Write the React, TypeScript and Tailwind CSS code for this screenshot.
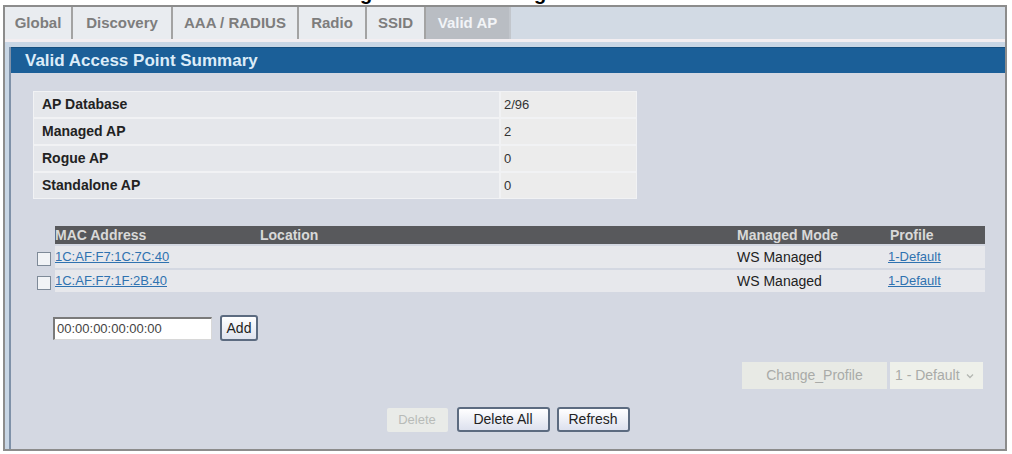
import React from "react";

const tabs = [
  { label: "Global", w: "w-[68px]" },
  { label: "Discovery", w: "w-[100px]" },
  { label: "AAA / RADIUS", w: "w-[126px]" },
  { label: "Radio", w: "w-[68px]" },
  { label: "SSID", w: "w-[59px]" },
];

const summary = [
  ["AP Database", "2/96"],
  ["Managed AP", "2"],
  ["Rogue AP", "0"],
  ["Standalone AP", "0"],
];

const macs = ["1C:AF:F7:1C:7C:40", "1C:AF:F7:1F:2B:40"];

export default function App() {
  return (
    <div
      className="w-[1012px] h-[454px] bg-white overflow-hidden"
      style={{ fontFamily: '"Liberation Sans", Arial, sans-serif' }}
    >
      {/* caption descenders */}
      <div className="relative h-[5px] overflow-hidden">
        <span className="absolute left-[360px] top-[-17px] text-[20px] font-bold text-black leading-none">g</span>
        <span className="absolute left-[534px] top-[-17px] text-[20px] font-bold text-black leading-none">g</span>
      </div>
      <div className="ml-[3px] w-[1004px] h-[446px] border-2 border-[#8c8c8c] flex flex-col bg-[#c8d6e5]">
        {/* tabs */}
        <div className="h-[32px] flex bg-[#d2dae4] shrink-0">
          {tabs.map((t) => (
            <div
              key={t.label}
              className={`${t.w} h-full bg-[#e9ecf0] border-r-2 border-[#a3a3a3] flex items-center justify-center text-[15px] font-bold text-[#7d7d7d]`}
            >
              {t.label}
            </div>
          ))}
          <div className="w-[85px] h-full bg-[#b9bdc3] border-r-2 border-[#c2c6cc] flex items-center justify-center text-[15px] font-bold text-[#f2f4f7]">
            Valid AP
          </div>
        </div>
        <div className="h-[3px] bg-[#f3eef1] shrink-0" />
        <div className="flex-1 pt-[5px] pl-[4px] flex">
          <div className="flex-1 border-l-2 border-[#7f91a8] bg-[#d4d8e2] flex flex-col">
            <div className="h-[26px] bg-[#1b5f98] border-t border-[#164f80] flex items-center pl-[14px] text-[17px] font-bold text-[#dcecf8]">
              Valid Access Point Summary
            </div>

            {/* summary table */}
            <div className="mt-[18px] ml-[22px] w-[604px] bg-[#f1f2f4] p-[1px] flex flex-col gap-[2px]">
              {summary.map(([k, v]) => (
                <div key={k} className="h-[25px] flex gap-[2px]">
                  <div className="w-[465px] bg-[#e5e7eb] flex items-center pl-[8px] text-[14px] font-bold text-[#222]">
                    {k}
                  </div>
                  <div className="flex-1 bg-[#ececec] flex items-center pl-[3px] text-[13px] text-[#333]">
                    {v}
                  </div>
                </div>
              ))}
            </div>

            {/* MAC table */}
            <div className="mt-[27px] ml-[24px] flex flex-col">
              <div className="flex">
                <div className="w-[20px]" />
                <div className="w-[930px] h-[18px] bg-[#58595c] grid grid-cols-[205px_477px_151px_1fr] items-center text-[14px] font-bold text-[#d9d9d9] leading-none">
                  <span>MAC Address</span>
                  <span>Location</span>
                  <span>Managed Mode</span>
                  <span className="pl-[2px]">Profile</span>
                </div>
              </div>
              {macs.map((m) => (
                <div key={m} className="flex mt-[2px]">
                  <div className="w-[20px] flex items-center">
                    <div className="w-[14px] h-[14px] mt-[4px] ml-[2px] border border-[#7e8a98] bg-[#f1f3f6]" />
                  </div>
                  <div className="w-[930px] h-[22px] bg-[#e7e8ec] grid grid-cols-[205px_477px_151px_1fr] items-center text-[14px] text-[#222]">
                    <span className="text-[13px] text-[#2f72b0] underline">{m}</span>
                    <span />
                    <span>WS Managed</span>
                    <span className="text-[13px] text-[#2f72b0] underline">1-Default</span>
                  </div>
                </div>
              ))}
            </div>

            {/* add row */}
            <div className="mt-[23px] ml-[42px] flex items-center gap-[8px]">
              <div className="w-[159px] h-[23px] bg-white border-t-2 border-l-2 border-[#7a7a7a] border-r border-b border-r-[#d8d8d8] border-b-[#d8d8d8] flex items-center pl-[2px] text-[13px] text-[#444]">
                00:00:00:00:00:00
              </div>
              <div className="w-[38px] h-[26px] rounded-[3px] border-2 border-[#5c6b80] bg-gradient-to-b from-[#ffffff] to-[#dfe3ee] flex items-center justify-center text-[14px] text-[#222]">
                Add
              </div>
            </div>

            {/* change profile row */}
            <div className="mt-[21px] mr-[22px] flex justify-end gap-[3px]">
              <div className="w-[145px] h-[27px] bg-[#e8eae5] flex items-center justify-center text-[14px] text-[#a9aba8]">
                Change_Profile
              </div>
              <div className="w-[93px] h-[27px] bg-[#eef0ea] flex items-center pl-[5px] text-[14px] text-[#a9aba8]">
                <span>1 - Default</span>
                <svg className="ml-[6px]" width="8" height="6" viewBox="0 0 8 6">
                  <path d="M1 1.5 L4 4.5 L7 1.5" stroke="#b4b7b2" strokeWidth="1.3" fill="none" />
                </svg>
              </div>
            </div>

            {/* bottom buttons */}
            <div className="mt-[18px] flex justify-center items-center">
              <div className="w-[61px] h-[24px] bg-[#e9ebe8] rounded-[2px] flex items-center justify-center text-[13px] text-[#b8bbb8]">
                Delete
              </div>
              <div className="ml-[9px] w-[93px] h-[25px] rounded-[3px] border-2 border-[#5c6b80] bg-gradient-to-b from-[#ffffff] to-[#dde1ee] flex items-center justify-center text-[14px] text-[#222]">
                Delete All
              </div>
              <div className="ml-[7px] w-[73px] h-[25px] rounded-[3px] border-2 border-[#5c6b80] bg-gradient-to-b from-[#ffffff] to-[#dde1ee] flex items-center justify-center text-[14px] text-[#222]">
                Refresh
              </div>
            </div>
          </div>
        </div>
      </div>
    </div>
  );
}
